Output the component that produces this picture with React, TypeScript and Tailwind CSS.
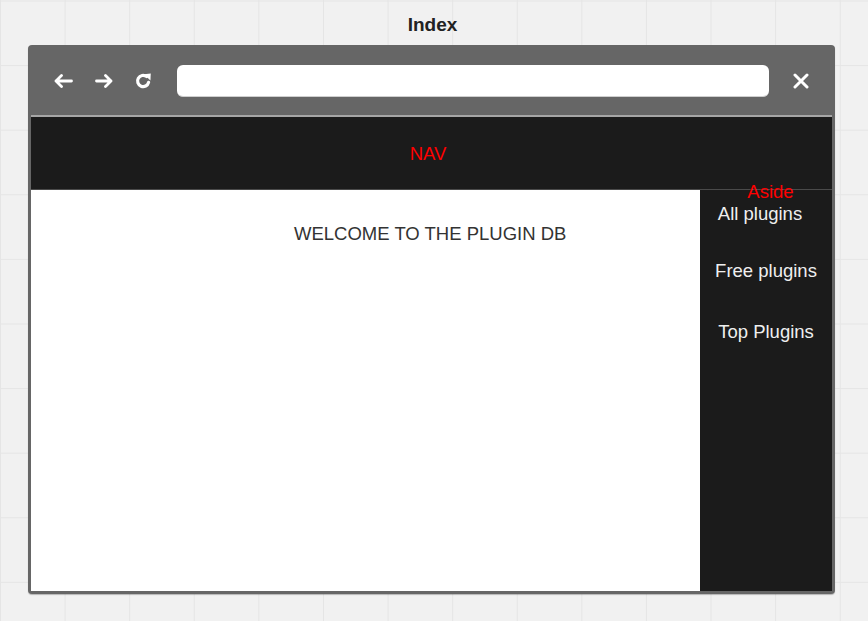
const font = { fontFamily: '"Liberation Sans", Arial, sans-serif' };

const ArrowLeft = () => (
  <svg width="19" height="14" viewBox="0 0 19 14" fill="none" stroke="white" strokeWidth="2.8" strokeLinecap="round" strokeLinejoin="round">
    <path d="M17.5 7H2M7.5 1.6L2 7l5.5 5.4" />
  </svg>
);

const ArrowRight = () => (
  <svg width="18" height="14" viewBox="0 0 18 14" fill="none" stroke="white" strokeWidth="2.8" strokeLinecap="round" strokeLinejoin="round">
    <path d="M1.5 7H16M10.5 1.6L16 7l-5.5 5.4" />
  </svg>
);

const Refresh = () => (
  <svg width="17" height="16" viewBox="0 0 17 16" fill="none">
    <path d="M11.6 3.6A5.6 5.6 0 1 0 13.6 9.4" stroke="white" strokeWidth="3.2" strokeLinecap="round" />
    <path d="M8.8 1.2L15.8 0.6L15.4 7.6Z" fill="white" />
  </svg>
);

const Close = () => (
  <svg width="16" height="16" viewBox="0 0 16 16" fill="none" stroke="white" strokeWidth="3" strokeLinecap="round">
    <path d="M2 2l12 12M14 2L2 14" />
  </svg>
);

export default function App() {
  return (
    <div
      className="min-h-screen w-full bg-[#f1f1f1] bg-[linear-gradient(to_right,#e5e5e5_1px,transparent_1px),linear-gradient(to_bottom,#e5e5e5_1px,transparent_1px)] bg-[size:64.6px_64.6px] bg-[position:0_0.5px]"
      style={font}
    >
      <div className="h-[45px] pt-[15px] pr-[3px] text-center text-[19px] leading-[20px] font-bold text-[#222]">
        Index
      </div>

      <div className="ml-[28px] w-[807px] h-[549px] rounded-[4px] bg-[#666666] px-[3px] pb-[3px] flex flex-col shadow-[0_1px_1px_rgba(0,0,0,0.25)]">
        {/* browser bar */}
        <div className="h-[70px] pt-[2px] flex items-center">
          <div className="pl-[23px] flex items-center">
            <ArrowLeft />
            <div className="ml-[22px]">
              <ArrowRight />
            </div>
            <div className="ml-[22px]">
              <Refresh />
            </div>
          </div>
          <div className="ml-[25px] flex-1 h-[32px] rounded-[6px] bg-white border-b border-[#cfcfcf]" />
          <div className="ml-[24px] mr-[23px] flex items-center">
            <Close />
          </div>
        </div>
        <div className="h-[2px] bg-[#a6a6a6]" />

        {/* nav */}
        <div className="h-[73px] bg-[#1b1b1b] border-b border-[#4a4a4a] flex items-center justify-center pr-[7px] pt-[2px]">
          <span className="text-[18.5px] leading-[20px] text-[#ff0000]">NAV</span>
        </div>

        {/* body */}
        <div className="flex-1 flex">
          <main className="w-[669px] bg-white">
            <h1 className="mt-[34px] pl-[263px] text-[18.5px] leading-[20px] text-[#333] font-normal">
              WELCOME TO THE PLUGIN DB
            </h1>
          </main>
          <aside className="flex-1 bg-[#1b1b1b] text-center text-[18.5px] leading-[20px] text-[#efefef]">
            <div className="-mt-[8px] pl-[9px] text-[#ff0000]">Aside</div>
            <ul>
              <li className="mt-[2px] pr-[12px]">All plugins</li>
              <li className="mt-[37px]">Free plugins</li>
              <li className="mt-[41px]">Top Plugins</li>
            </ul>
          </aside>
        </div>
      </div>
    </div>
  );
}
